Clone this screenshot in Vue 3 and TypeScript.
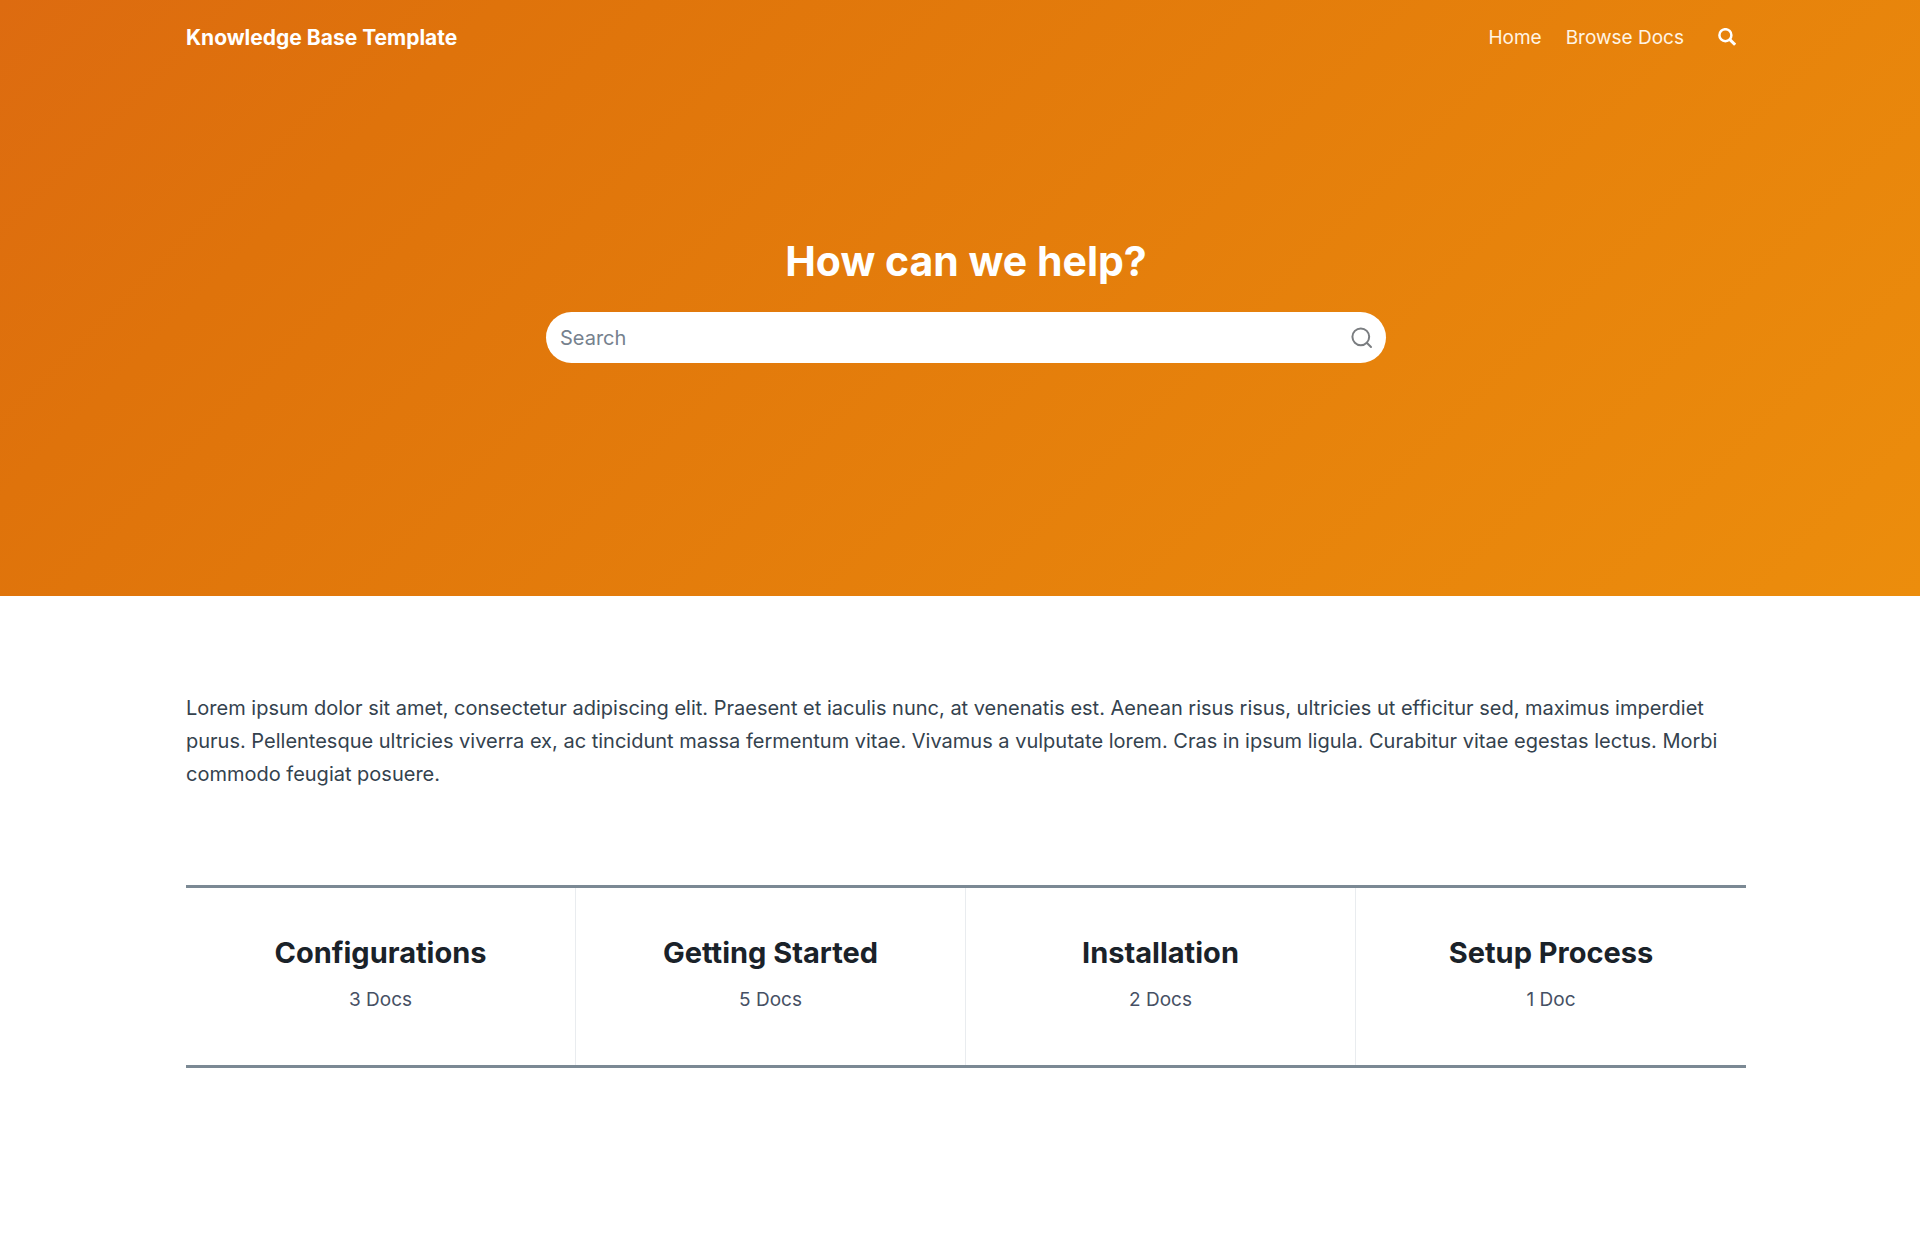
<script setup lang="ts">
interface Category {
  name: string
  count: number
}

const categories: Category[] = [
  { name: 'Configurations', count: 3 },
  { name: 'Getting Started', count: 5 },
  { name: 'Installation', count: 2 },
  { name: 'Setup Process', count: 1 },
]
</script>

<template>
  <div class="page">
    <div class="hero">
      <header class="bar">
        <a class="brand" href="#">Knowledge Base Template</a>
        <nav class="nav">
          <a href="#">Home</a>
          <a href="#">Browse Docs</a>
          <button class="toggle" type="button" aria-label="Open search">
            <svg viewBox="0 0 18 18" width="18" height="18" fill="none" stroke="currentColor">
              <circle cx="7.4" cy="7.2" r="6" stroke-width="2.5" />
              <path d="M11.6 11.4L17.1 16.8" stroke-width="3" />
            </svg>
          </button>
        </nav>
      </header>
      <section class="ask">
        <h1>How can we help?</h1>
        <form class="search" role="search" @submit.prevent>
          <input type="search" placeholder="Search" aria-label="Search" />
          <button type="submit" aria-label="Submit search">
            <svg viewBox="0 0 24 24" width="24" height="24" fill="none" stroke="currentColor" stroke-width="2" stroke-linecap="round">
              <circle cx="10.8" cy="10.8" r="8.4" />
              <path d="M17 17L21 21" />
            </svg>
          </button>
        </form>
      </section>
    </div>
    <main class="content">
      <p class="intro">
        Lorem ipsum dolor sit amet, consectetur adipiscing elit. Praesent et iaculis nunc, at venenatis est. Aenean risus risus, ultricies ut efficitur sed, maximus imperdiet purus. Pellentesque ultricies viverra ex, ac tincidunt massa fermentum vitae. Vivamus a vulputate lorem. Cras in ipsum ligula. Curabitur vitae egestas lectus. Morbi commodo feugiat posuere.
      </p>
      <section class="categories">
        <a v-for="c in categories" :key="c.name" class="category" href="#">
          <h2>{{ c.name }}</h2>
          <span>{{ c.count }} {{ c.count === 1 ? 'Doc' : 'Docs' }}</span>
        </a>
      </section>
    </main>
  </div>
</template>

<style>
body {
  margin: 0;
  background: #fff;
}
</style>

<style scoped>
.page {
  font-family: Inter, 'Liberation Sans', sans-serif;
  font-size: 20px;
  color: #34424e;
}

a {
  color: inherit;
  text-decoration: none;
}

button {
  display: flex;
  padding: 0;
  border: 0;
  background: none;
  color: inherit;
  cursor: pointer;
}

h1,
h2,
p {
  margin: 0;
}

.hero {
  display: flex;
  flex-direction: column;
  box-sizing: border-box;
  min-height: 596px;
  padding: 0 174px 0 186px;
  background: linear-gradient(135deg, #dd6b10 0%, #df730b 20%, #ec8d0c 100%);
  color: #fff;
}

.bar {
  display: flex;
  align-items: center;
  justify-content: space-between;
  height: 74px;
}

.brand {
  font-size: 21px;
  font-weight: 700;
}

.nav {
  display: flex;
  align-items: center;
  gap: 24px;
  font-size: 19px;
  color: #fff4e4;
}

.toggle {
  padding: 0 10px;
  color: #fff;
}

.ask {
  display: flex;
  flex-direction: column;
  align-items: center;
  gap: 24px;
  padding-top: 160px;
}

h1 {
  font-size: 41px;
  line-height: 54px;
  font-weight: 700;
}

.search {
  display: flex;
  align-items: center;
  box-sizing: border-box;
  width: 840px;
  max-width: 100%;
  height: 51px;
  padding: 0 12px 0 14px;
  border-radius: 26px;
  background: #fff;
  color: #7a7d80;
}

.search input {
  flex: 1;
  min-width: 0;
  padding: 0;
  border: 0;
  outline: 0;
  background: none;
  font: inherit;
  color: #2d3748;
}

.search input::placeholder {
  color: #76818e;
  opacity: 1;
}

.content {
  padding: 96px 174px 96px 186px;
}

.intro {
  line-height: 33px;
}

.categories {
  display: grid;
  grid-template-columns: repeat(4, 1fr);
  margin-top: 94px;
  border-top: 3px solid #7b8994;
  border-bottom: 3px solid #7b8994;
}

.category {
  display: flex;
  flex-direction: column;
  align-items: center;
  gap: 11px;
  padding: 45px 0 49px;
}

.category:not(:last-child) {
  border-right: 1px solid #e9ecef;
}

h2 {
  font-size: 29px;
  line-height: 40px;
  font-weight: 700;
  color: #1a2229;
}

.category span {
  font-size: 19px;
  line-height: 32px;
  color: #465064;
}
</style>
